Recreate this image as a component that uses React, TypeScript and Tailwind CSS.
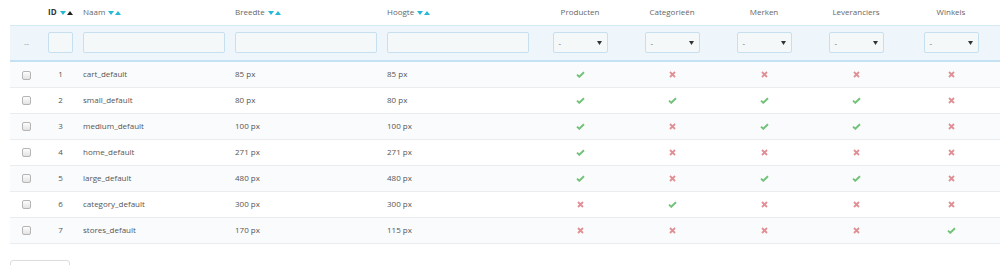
import React from 'react'

type Row = {
  id: number
  name: string
  w: number
  h: number
  flags: boolean[]
}

const rows: Row[] = [
  { id: 1, name: 'cart_default', w: 85, h: 85, flags: [true, false, false, false, false] },
  { id: 2, name: 'small_default', w: 80, h: 80, flags: [true, true, true, true, false] },
  { id: 3, name: 'medium_default', w: 100, h: 100, flags: [true, false, true, true, false] },
  { id: 4, name: 'home_default', w: 271, h: 271, flags: [true, false, false, false, false] },
  { id: 5, name: 'large_default', w: 480, h: 480, flags: [true, false, true, true, false] },
  { id: 6, name: 'category_default', w: 300, h: 300, flags: [false, true, false, false, false] },
  { id: 7, name: 'stores_default', w: 170, h: 115, flags: [false, false, false, false, true] },
]

const flagCols = ['Producten', 'Categorieën', 'Merken', 'Leveranciers', 'Winkels']

function SortIcons({ active }: { active?: boolean }) {
  return (
    <span className="inline-flex items-center gap-[1px] ml-[3px] align-middle">
      <svg width="6" height="4" viewBox="0 0 6 4">
        <path d="M0 0h6L3 4z" fill="#25b9d7" />
      </svg>
      <svg width="6" height="4" viewBox="0 0 6 4">
        <path d="M0 4h6L3 0z" fill={active ? '#222' : '#25b9d7'} />
      </svg>
    </span>
  )
}

function Check() {
  return (
    <svg width="9" height="7" viewBox="0 0 9 7" className="inline-block">
      <path d="M1 3.6 3.3 5.8 8 1.2" fill="none" stroke="#72c279" strokeWidth="1.9" />
    </svg>
  )
}

function Cross() {
  return (
    <svg width="7" height="7" viewBox="0 0 7 7" className="inline-block">
      <path d="M1 1l5 5M6 1 1 6" fill="none" stroke="#e08f95" strokeWidth="1.8" />
    </svg>
  )
}

function Checkbox() {
  return (
    <span className="inline-block w-[9px] h-[9px] rounded-[2px] border border-[#b5b5b5] bg-gradient-to-b from-[#fdfdfd] to-[#e3e3e3] align-middle" />
  )
}

function SelectBox() {
  return (
    <div className="mx-auto w-[55px] h-[21px] rounded-[2px] border border-[#c7e0f0] bg-[#f5f8f9] flex items-center justify-between px-[5px]">
      <span className="text-[8px] text-[#666] leading-none">-</span>
      <svg width="5" height="4" viewBox="0 0 5 4">
        <path d="M0 0h5L2.5 4z" fill="#333" />
      </svg>
    </div>
  )
}

export default function App() {
  return (
    <div className="w-[1000px] h-[265px] bg-white overflow-hidden font-['Open_Sans',sans-serif] text-[8px] text-[#555]">
      <table className="ml-[10px] w-[990px] table-fixed border-collapse">
        <colgroup>
          <col className="w-[33px]" />
          <col className="w-[35px]" />
          <col className="w-[152px]" />
          <col className="w-[152px]" />
          <col className="w-[152px]" />
          <col className="w-[92px]" />
          <col className="w-[92px]" />
          <col className="w-[92px]" />
          <col className="w-[92px]" />
          <col className="w-[98px]" />
        </colgroup>
        <thead>
          <tr className="h-[25px] text-[#666]">
            <th />
            <th className="text-left px-[5px] font-bold text-[#333]">
              ID
              <SortIcons active />
            </th>
            <th className="text-left px-[5px] font-normal">
              Naam
              <SortIcons />
            </th>
            <th className="text-left px-[5px] font-normal">
              Breedte
              <SortIcons />
            </th>
            <th className="text-left px-[5px] font-normal">
              Hoogte
              <SortIcons />
            </th>
            {flagCols.map((c) => (
              <th key={c} className="text-center font-normal">
                {c}
              </th>
            ))}
          </tr>
          <tr className="h-[36px] bg-[#eef6fb] border-t border-[#d6eaf6] border-b-2 border-b-[#c3e1f2]">
            <td className="text-center text-[#999] align-middle">--</td>
            {[0, 1, 2, 3].map((i) => (
              <td key={i} className="px-[5px]">
                <div className="h-[21px] rounded-[2px] border border-[#c7e0f0] bg-[#f5f8f9]" />
              </td>
            ))}
            {flagCols.map((c) => (
              <td key={c}>
                <SelectBox />
              </td>
            ))}
          </tr>
        </thead>
        <tbody>
          {rows.map((r, i) => (
            <tr
              key={r.id}
              className={`h-[26px] border-b border-[#eaedef] ${i % 2 === 0 ? 'bg-[#fafbfc]' : 'bg-white'}`}
            >
              <td className="text-center">
                <Checkbox />
              </td>
              <td className="text-center">{r.id}</td>
              <td className="px-[5px]">{r.name}</td>
              <td className="px-[5px]">{r.w} px</td>
              <td className="px-[5px]">{r.h} px</td>
              {r.flags.map((f, j) => (
                <td key={j} className="text-center leading-none">
                  {f ? <Check /> : <Cross />}
                </td>
              ))}
            </tr>
          ))}
        </tbody>
      </table>
      <div className="ml-[10px] mt-[16px] w-[60px] h-[20px] rounded-[3px] border border-[#dcdcdc] bg-white" />
    </div>
  )
}
